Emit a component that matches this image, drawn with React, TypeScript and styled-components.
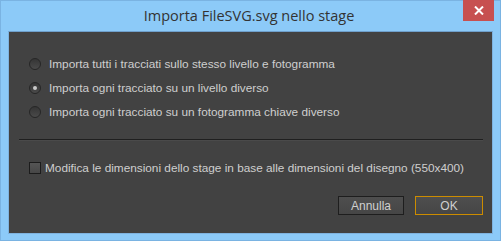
import React from 'react';
import styled, { createGlobalStyle } from 'styled-components';

const GlobalStyle = createGlobalStyle`
  html, body { margin: 0; padding: 0; background: #8cc8f7; }
`;

const Window = styled.div`
  box-sizing: border-box;
  width: 501px;
  height: 241px;
  background: #8ccaf8;
  border: 1px solid #7ab3e2;
  display: flex;
  flex-direction: column;
  padding: 0 7px 6px 7px;
`;

const TitleBar = styled.div`
  position: relative;
  height: 29px;
  display: flex;
  align-items: center;
  justify-content: center;
  font-family: "Open Sans", "Noto Sans", sans-serif;
  font-size: 14.5px;
  color: #333;
  padding: 0 3px 1px 0;
`;

const CloseButton = styled.div`
  position: absolute;
  top: -1px;
  right: -1px;
  width: 31px;
  height: 21px;
  background: #c75050;
  display: flex;
  align-items: center;
  justify-content: center;
`;

const Content = styled.div`
  flex: 1;
  background: #424242;
  border: 1px solid #7fb3df;
  border-top-color: #6fa0cc;
  display: flex;
  flex-direction: column;
  padding: 20px 9px 0 20px;
  font-family: "Liberation Sans", Arial, sans-serif;
  font-size: 11.8px;
  color: #cfcfcf;
  white-space: nowrap;
`;

const OptionRow = styled.label`
  height: 24px;
  display: flex;
  align-items: center;
  gap: 8px;
`;

const Radio = styled.span<{ $checked?: boolean }>`
  box-sizing: border-box;
  flex: none;
  width: 12px;
  height: 12px;
  border-radius: 50%;
  border: 1px solid #262626;
  background: linear-gradient(#353535, #4a4a4a);
  display: flex;
  align-items: center;
  justify-content: center;
  &::after {
    content: '';
    width: 4px;
    height: 4px;
    border-radius: 50%;
    background: ${(p) => (p.$checked ? '#c9c9c9' : 'transparent')};
  }
`;

const Separator = styled.div`
  height: 1px;
  background: #1f1f1f;
  border-bottom: 1px solid #4a4a4a;
  margin: 15px 0 0 -10px;
`;

const CheckRow = styled.label`
  height: 20px;
  margin-top: 17px;
  display: flex;
  align-items: center;
  gap: 4px;
`;

const Checkbox = styled.span`
  box-sizing: border-box;
  flex: none;
  width: 12px;
  height: 12px;
  border: 1px solid #1c1c1c;
  background: linear-gradient(#555, #474747);
`;

const Buttons = styled.div`
  margin-top: 18px;
  display: flex;
  justify-content: flex-end;
  gap: 11px;
`;

const Button = styled.div<{ $primary?: boolean; $w: number }>`
  box-sizing: border-box;
  width: ${(p) => p.$w}px;
  height: 19px;
  border: 1px solid ${(p) => (p.$primary ? '#cc8c00' : '#1e1e1e')};
  background: linear-gradient(#4e4e4e, #464646);
  display: flex;
  align-items: center;
  justify-content: center;
  font-size: 12px;
  color: #d0d0d0;
`;

const options = [
  'Importa tutti i tracciati sullo stesso livello e fotogramma',
  'Importa ogni tracciato su un livello diverso',
  'Importa ogni tracciato su un fotogramma chiave diverso',
];

export default function App() {
  return (
    <>
      <GlobalStyle />
      <Window>
        <TitleBar>
          Importa FileSVG.svg nello stage
          <CloseButton>
            <svg width="10" height="9" viewBox="0 0 10 9">
              <path d="M1 0.5 L9 8.5 M9 0.5 L1 8.5" stroke="#fff" strokeWidth="2" />
            </svg>
          </CloseButton>
        </TitleBar>
        <Content>
          {options.map((o, i) => (
            <OptionRow key={o}>
              <Radio $checked={i === 1} />
              {o}
            </OptionRow>
          ))}
          <Separator />
          <CheckRow>
            <Checkbox />
            Modifica le dimensioni dello stage in base alle dimensioni del disegno (550x400)
          </CheckRow>
          <Buttons>
            <Button $w={66}>Annulla</Button>
            <Button $w={68} $primary>OK</Button>
          </Buttons>
        </Content>
      </Window>
    </>
  );
}
